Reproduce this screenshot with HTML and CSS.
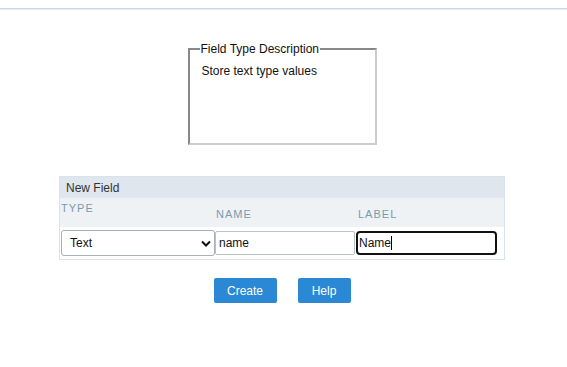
FILE: index.html
```html
<!DOCTYPE html>
<html lang="en">
<head>
    <meta charset="UTF-8">
    <title>New Field</title>
    <link rel="stylesheet" href="styles.css">
</head>
<body>

    <div class="top-line"></div>

    <div class="page">
        <fieldset class="type-desc">
            <legend>Field Type Description</legend>
            <div class="desc-text">Store text type values</div>
        </fieldset>

        <table class="new-field">
            <tr class="title-row">
                <td colspan="3">New Field</td>
            </tr>
            <tr class="label-row">
                <td class="col-type"><span class="lbl lbl-top">TYPE</span></td>
                <td class="col-name"><span class="lbl">NAME</span></td>
                <td class="col-label"><span class="lbl">LABEL</span></td>
            </tr>
            <tr class="input-row">
                <td class="col-type">
                    <div class="select-box">
                        <span>Text</span>
                        <svg width="10" height="7" viewBox="0 0 10 7"><path d="M1 1.5 L5 5.5 L9 1.5" fill="none" stroke="#111" stroke-width="2"/></svg>
                    </div>
                </td>
                <td class="col-name"><input type="text" class="txt" value="name"></td>
                <td class="col-label"><div class="txt focused">Name<span class="caret"></span></div></td>
            </tr>
        </table>

        <div class="buttons">
            <button class="btn btn-create">Create</button>
            <button class="btn btn-help">Help</button>
        </div>
    </div>

</body>
</html>
```

FILE: styles.css
```css
body {
    margin: 0;
    font-family: "Liberation Sans", Arial, sans-serif;
    font-size: 12px;
    color: #222;
}
.top-line {
    margin-top: 8px;
    border-top: 1px solid #c8dae0;
    height: 1px;
    background-color: #e4eef1;
}
.page {
    width: 564px;
}
.type-desc {
    box-sizing: content-box;
    width: 165px;
    height: 87px;
    margin: 32px auto 0;
    padding: 6px 8px 6px 12px;
    border-color: #888 #ccc #ccc #888;
    border-style: solid;
    border-width: 2px;
}
.type-desc legend {
    padding: 0 1px;
    margin-left: -2px;
    color: #111;
}
.desc-text {
    color: #111;
    margin-top: 2px;
}
.new-field {
    width: 446px;
    margin: 31px auto 0;
    border-collapse: collapse;
    border: 1px solid #dbe3ea;
}
.new-field td {
    padding: 0;
}
.title-row td {
    background-color: #dfe6ee;
    height: 21px;
    padding-left: 6px;
    color: #333;
}
.label-row td {
    background-color: #eef2f5;
    height: 29px;
    vertical-align: top;
}
.lbl {
    display: inline-block;
    color: #7a9aae;
    font-size: 11px;
    letter-spacing: 1px;
    margin-top: 10px;
}
.lbl-top {
    margin-top: 4px;
    margin-left: 1px;
}
.col-type {
    width: 155px;
}
.col-name {
    width: 141px;
}
.col-name .lbl {
    margin-left: 1px;
}
.col-label .lbl {
    margin-left: 2px;
}
.input-row td {
    height: 32px;
    vertical-align: middle;
}
.select-box {
    display: flex;
    align-items: center;
    justify-content: space-between;
    box-sizing: border-box;
    width: 154px;
    height: 26px;
    margin-left: 1px;
    padding: 0 3px 0 8px;
    border: 1px solid #a8b0b8;
    border-radius: 3px;
    background-color: #fff;
    color: #111;
}
.txt {
    display: block;
    box-sizing: border-box;
    width: 140px;
    height: 24px;
    margin: 0;
    padding: 0 3px;
    border: 1px solid #b8c0c8;
    border-radius: 2px;
    font-family: "Liberation Sans", Arial, sans-serif;
    font-size: 12px;
    color: #111;
    line-height: 22px;
    background-color: #fff;
}
.focused {
    width: 141px;
    border: 2px solid #111;
    border-radius: 4px;
    padding: 0 1px;
    line-height: 20px;
}
.caret {
    display: inline-block;
    width: 1px;
    height: 14px;
    background-color: #000;
    vertical-align: -3px;
}
.buttons {
    display: flex;
    justify-content: center;
    gap: 21px;
    margin-top: 18px;
}
.btn {
    height: 25px;
    padding: 0;
    background-color: #2a88d4;
    color: #fff;
    border: none;
    border-radius: 2px;
    font-family: "Liberation Sans", Arial, sans-serif;
    font-size: 12px;
    cursor: pointer;
}
.btn-create {
    width: 63px;
}
.btn-help {
    width: 53px;
}
```
